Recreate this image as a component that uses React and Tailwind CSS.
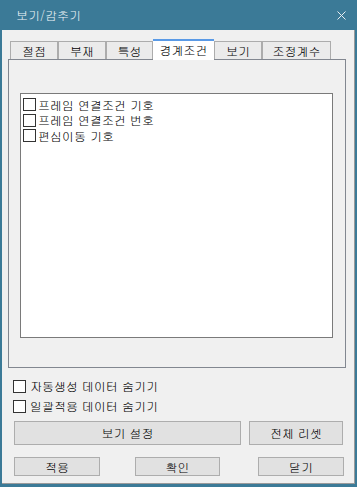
import React from "react";

const font = "font-['Gulim','Noto_Sans_CJK_KR',sans-serif]";

function Box() {
  return <span className="block w-[13px] h-[13px] border border-[#333333] bg-white shrink-0" />;
}

function ListItem({ label }) {
  return (
    <div className="flex items-center h-[15.5px]">
      <Box />
      <span className="ml-[2px] text-[12px] leading-[14px] text-black">{label}</span>
    </div>
  );
}

function Tab({ label, w, selected }) {
  if (selected) {
    return (
      <div
        className={`relative z-10 h-[21px] -mb-[1px] border-t-2 border-[#5a9ae6] bg-white flex items-center justify-center text-[12px] text-black`}
        style={{ width: w }}
      >
        <span className="leading-[14px] -mt-[2px]">{label}</span>
      </div>
    );
  }
  return (
    <div
      className="h-[18px] border-t border-x border-[#acacac] bg-[#ebebeb] flex items-center justify-center text-[12px] text-black"
      style={{ width: w }}
    >
      <span className="leading-[14px]">{label}</span>
    </div>
  );
}

function Btn({ label, w, h }) {
  return (
    <div
      className="border border-[#adadad] bg-[#e1e1e1] flex items-center justify-center text-[12px] text-black"
      style={{ width: w, height: h }}
    >
      <span className="leading-[14px]">{label}</span>
    </div>
  );
}

export default function App() {
  return (
    <div className={`w-[357px] h-[487px] flex flex-col bg-[#3b7a97] ${font}`}>
      <div className="h-[30px] flex items-center justify-between pl-[16px] pr-[11px] shrink-0">
        <span className="text-[12px] leading-[14px] text-[#eef4f7]">보기/감추기</span>
        <svg width="9" height="9" viewBox="0 0 9 9" className="mt-[0px]">
          <path d="M0.5 0.5 L8.5 8.5 M8.5 0.5 L0.5 8.5" stroke="#e8eef2" strokeWidth="1" fill="none" />
        </svg>
      </div>
      <div className="flex-1 ml-[2px] mr-[2px] mb-[3px] bg-[#f0f0f0] border-r border-b border-[#9a9a9a] flex flex-col">
        <div className="mt-[9px] ml-[8px] h-[20px] flex items-end">
          <Tab label="절점" w={48} />
          <Tab label="부재" w={48} />
          <Tab label="특성" w={47} />
          <Tab label="경계조건" w={61} selected />
          <Tab label="보기" w={48} />
          <Tab label="조정계수" w={69} />
        </div>
        <div className="ml-[6px] w-[338px] h-[309px] border border-[#828790] flex flex-col">
          <div className="ml-[11px] mt-[33px] w-[313px] h-[245px] border border-[#7a7a7a] bg-white pt-[3px] pl-[2px] flex flex-col">
            <ListItem label="프레임 연결조건 기호" />
            <ListItem label="프레임 연결조건 번호" />
            <ListItem label="편심이동 기호" />
          </div>
        </div>
        <div className="ml-[11px] mt-[11px] flex flex-col gap-[6px]">
          <div className="flex items-center">
            <Box />
            <span className="ml-[4px] text-[12px] leading-[14px] text-black">자동생성 데이터 숨기기</span>
          </div>
          <div className="flex items-center">
            <Box />
            <span className="ml-[4px] text-[12px] leading-[14px] text-black">일괄적용 데이터 숨기기</span>
          </div>
        </div>
        <div className="ml-[12px] mt-[8px] flex">
          <Btn label="보기 설정" w={227} h={24} />
          <div className="ml-[8px]">
            <Btn label="전체 리셋" w={94} h={24} />
          </div>
        </div>
        <div className="ml-[12px] mt-[12px] flex">
          <Btn label="적용" w={86} h={19} />
          <div className="ml-[35px]">
            <Btn label="확인" w={85} h={19} />
          </div>
          <div className="ml-[38px]">
            <Btn label="닫기" w={86} h={19} />
          </div>
        </div>
      </div>
    </div>
  );
}
